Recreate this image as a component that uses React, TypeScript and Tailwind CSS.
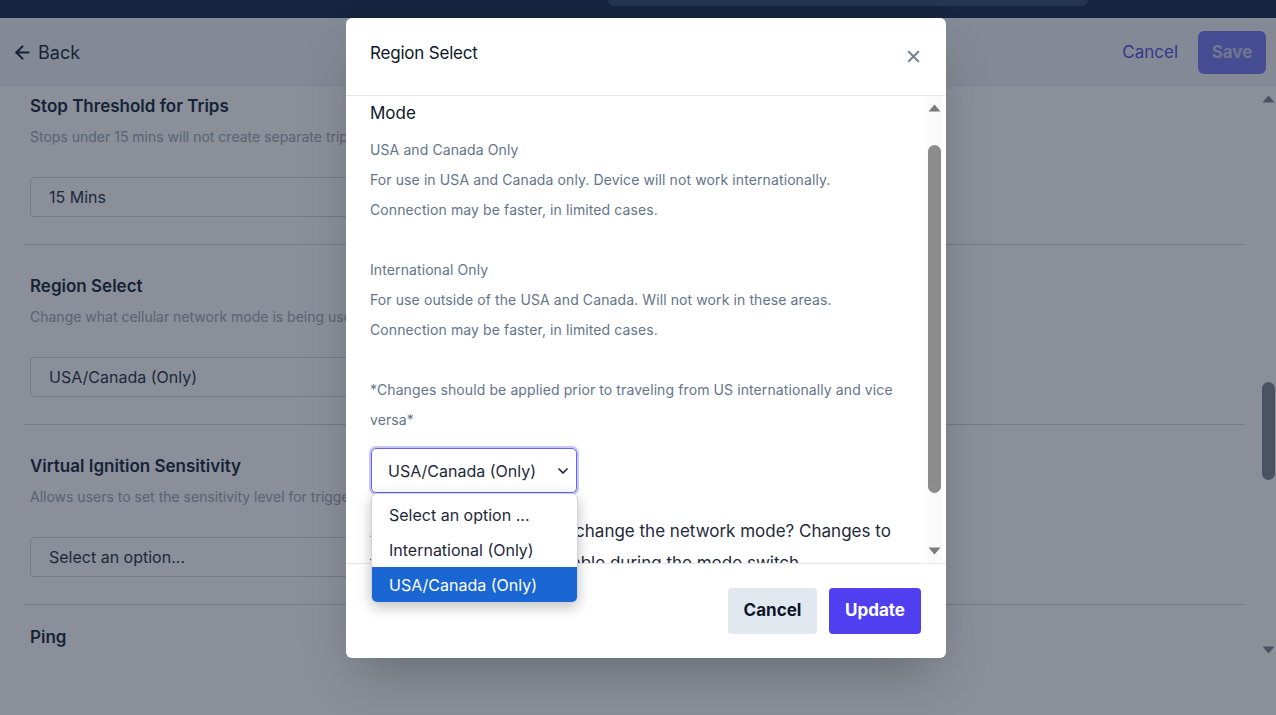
import { ArrowLeft, ChevronDown, X } from "lucide-react";

const font = "font-['Inter','Liberation_Sans',sans-serif]";

function ScrollArrow({ dir, className }: { dir: "up" | "down"; className: string }) {
  return (
    <svg width="13" height="8" viewBox="0 0 13 8" className={className}>
      {dir === "up" ? (
        <path d="M6.5 0.5 L12.5 7.5 L0.5 7.5 Z" fill="currentColor" />
      ) : (
        <path d="M0.5 0.5 L12.5 0.5 L6.5 7.5 Z" fill="currentColor" />
      )}
    </svg>
  );
}

function Section({
  title,
  description,
  value,
  first,
}: {
  title: string;
  description: string;
  value: string;
  first?: boolean;
}) {
  return (
    <div className={`border-b border-[#d1d5db] px-1.5 pb-[27px] ${first ? "pt-[7px]" : "pt-[29px]"}`}>
      <h3 className="text-[17px] font-semibold leading-6 text-[#0f1b33]">{title}</h3>
      <p className="mt-[9px] text-[14px] leading-5 text-[#9ca3af]">{description}</p>
      <div className="mt-[30px] flex h-10 w-[640px] items-center rounded-[4px] border border-[#d1d5db] bg-white px-[18px] text-[16px] text-[#1e293b]">
        {value}
      </div>
    </div>
  );
}

export default function App() {
  return (
    <div className={`relative h-[715px] w-full overflow-hidden bg-white ${font}`}>
      {/* top nav (partly scrolled out) */}
      <nav className="h-[18px] bg-[#172440] pl-[608px]">
        <div className="h-[6px] w-[480px] rounded-b-md bg-[#26354f]" />
      </nav>

      {/* page header */}
      <header className="flex h-[69px] items-center justify-between bg-[#f3f4f6] pl-3 pr-[10px]">
        <button className="flex items-center gap-[5px] text-[18px] text-[#0f1b33]">
          <ArrowLeft size={21} strokeWidth={2.4} />
          Back
        </button>
        <div className="flex items-center gap-5">
          <span className="text-[17px] text-[#4f46e5]">Cancel</span>
          <button className="h-[43px] w-[68px] rounded-md bg-[#7175f0] text-[17px] font-bold text-[#c9cbf0]">
            Save
          </button>
        </div>
      </header>

      {/* settings list */}
      <main className="flex h-[575px]">
        <div className="flex-1 overflow-hidden pl-6 pr-4">
          <Section
            first
            title="Stop Threshold for Trips"
            description="Stops under 15 mins will not create separate trips."
            value="15 Mins"
          />
          <Section
            title="Region Select"
            description="Change what cellular network mode is being used by the device."
            value="USA/Canada (Only)"
          />
          <Section
            title="Virtual Ignition Sensitivity"
            description="Allows users to set the sensitivity level for triggering virtual ignition."
            value="Select an option..."
          />
          <div className="px-1.5 pt-[20px]">
            <h3 className="text-[17px] font-semibold leading-6 text-[#0f1b33]">Ping</h3>
          </div>
        </div>
        <div className="flex w-[15px] flex-col items-center">
          <ScrollArrow dir="up" className="mt-[8px] text-[#7c828c]" />
          <div className="mt-[279px] h-[98px] w-[13px] rounded-full bg-[#7c828c]" />
          <div className="flex-1" />
          <ScrollArrow dir="down" className="mb-[8px] text-[#7c828c]" />
        </div>
      </main>

      {/* overlay */}
      <div className="absolute inset-x-0 bottom-0 top-[18px] bg-[#1e293b]/[0.52]" />

      {/* modal */}
      <div className="absolute left-[346px] top-[18px] flex h-[640px] w-[600px] flex-col rounded-md bg-white shadow-2xl">
        <div className="flex h-[78px] shrink-0 items-start justify-between border-b border-[#e5e7eb] pl-6 pr-[23px] pt-[23px]">
          <h2 className="text-[17px] leading-6 tracking-[-0.2px] text-[#0f172a]">Region Select</h2>
          <X size={19} strokeWidth={2.6} className="mt-[6px] text-[#7b8290]" />
        </div>

        <div className="flex h-[467px] shrink-0">
          <div className="flex-1 overflow-hidden pl-6 pr-[12px] pt-[1px]">
            <h3 className="text-[17px] leading-8 text-[#0f172a]">Mode</h3>
            <div className="mt-1.5 text-[14px] leading-[30px] tracking-[0.1px] text-[#64748b]">
              <p>USA and Canada Only</p>
              <p>For use in USA and Canada only. Device will not work internationally.</p>
              <p>Connection may be faster, in limited cases.</p>
              <p>&nbsp;</p>
              <p>International Only</p>
              <p>For use outside of the USA and Canada. Will not work in these areas.</p>
              <p>Connection may be faster, in limited cases.</p>
              <p>&nbsp;</p>
              <p>*Changes should be applied prior to traveling from US internationally and vice versa*</p>
            </div>
            <div className="ml-[1px] mt-[13px] flex h-[45px] w-[206px] items-center justify-between rounded-[5px] border border-[#6366f1] pl-[16px] pr-[5px] text-[16px] text-[#1e293b] ring-[2px] ring-[#c7c6f7]">
              USA/Canada (Only)
              <ChevronDown size={16} strokeWidth={2.6} className="text-[#1e293b]" />
            </div>
            <p className="mt-[22px] text-[17px] leading-8 text-[#1e293b]">
              Are you sure you want to change the network mode? Changes to the device will be unavailable during the mode switch.
            </p>
          </div>
          <div className="mr-1 flex w-[15px] flex-col items-center bg-[#fafafa]">
            <ScrollArrow dir="up" className="mt-[8px] text-[#7a7a7a]" />
            <div className="mt-[33px] h-[348px] w-[13px] rounded-full bg-[#8c8c8c]" />
            <div className="flex-1" />
            <ScrollArrow dir="down" className="mb-[8px] text-[#7a7a7a]" />
          </div>
        </div>

        <div className="flex flex-1 items-center justify-end gap-3 border-t border-[#e5e7eb] pr-[25px]">
          <button className="h-[46px] w-[89px] rounded-[4px] bg-[#e2e8f0] text-[17px] font-bold text-[#0f172a]">
            Cancel
          </button>
          <button className="h-[46px] w-[92px] rounded-[4px] bg-[#4f3ff0] text-[17px] font-bold text-white">
            Update
          </button>
        </div>

        {/* open native select popup */}
        <div className="absolute left-[25px] top-[475px] w-[207px] overflow-hidden rounded-md border border-[#d4d4d8] bg-white pt-[3px] text-[16px] text-[#1e293b] shadow-[0_4px_14px_rgba(0,0,0,0.25)]">
          <div className="flex h-[35px] items-center pl-[17px]">Select an option ...</div>
          <div className="flex h-[35px] items-center pl-[17px]">International (Only)</div>
          <div className="flex h-[35px] items-center bg-[#1a66d2] pl-[17px] text-white">USA/Canada (Only)</div>
        </div>
      </div>
    </div>
  );
}
